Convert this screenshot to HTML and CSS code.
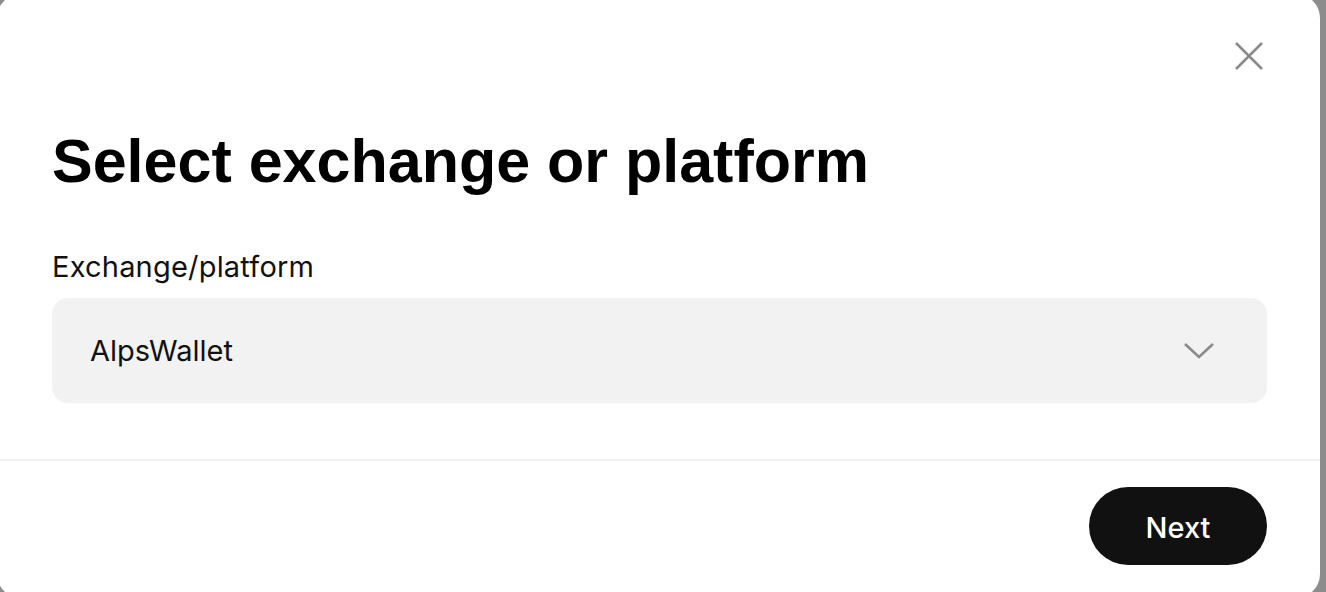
FILE: index.html
```html
<!DOCTYPE html>
<html lang="en">
<head>
    <meta charset="UTF-8">
    <meta name="viewport" content="width=device-width, initial-scale=1.0">
    <title>Select exchange or platform</title>
    <link rel="stylesheet" href="styles.css">
</head>
<body>

    <div class="modal">
        <div class="modal-body">
            <div class="top-row">
                <button class="close-button" aria-label="Close">
                    <svg width="30" height="30" viewBox="0 0 30 30">
                        <path d="M2 2 L28 28 M28 2 L2 28" stroke="#8a8a8a" stroke-width="2.6" fill="none"/>
                    </svg>
                </button>
            </div>

            <h1>Select exchange or platform</h1>

            <label class="field-label" for="platform">Exchange/platform</label>
            <div class="select-box" id="platform">
                <span>AlpsWallet</span>
                <svg width="32" height="18" viewBox="0 0 32 18">
                    <path d="M2 2 L16 15 L30 2" stroke="#8a8a8a" stroke-width="2.6" fill="none"/>
                </svg>
            </div>
        </div>

        <div class="modal-footer">
            <button class="next-button">Next</button>
        </div>
    </div>

</body>
</html>
```

FILE: styles.css
```css
/* Core styles */
body {
    margin: 0;
    background-color: #8c8c8c;
    font-family: Inter, "Noto Sans", sans-serif;
    color: #111;
    overflow: hidden;
}

.modal {
    margin: -6px 0 0 -3px;
    width: 1323px;
    height: 604px;
    background-color: #fff;
    border-radius: 24px;
    display: flex;
    flex-direction: column;
}

.modal-body {
    padding: 47px 53px 0 55px;
    border-bottom: 2px solid #f2f2f2;
    height: 467px;
    box-sizing: border-box;
}

.top-row {
    display: flex;
    justify-content: flex-end;
}

.close-button {
    background: none;
    border: none;
    padding: 0;
    margin-right: 3px;
    width: 30px;
    height: 30px;
    cursor: pointer;
}

h1 {
    font-family: "Liberation Sans", Arial, sans-serif;
    font-weight: 700;
    font-size: 61px;
    line-height: 70px;
    margin: 55px 0 0 0;
    color: #000;
}

.field-label {
    display: block;
    font-size: 29px;
    letter-spacing: 0.2px;
    line-height: 36px;
    margin-top: 53px;
    color: #111;
}

.select-box {
    margin-top: 13px;
    height: 105px;
    background-color: #f2f2f2;
    border-radius: 16px;
    display: flex;
    align-items: center;
    justify-content: space-between;
    padding: 0 52px 0 38px;
    font-size: 29px;
}

.modal-footer {
    display: flex;
    justify-content: flex-end;
    padding: 26px 53px 0 0;
}

.next-button {
    width: 178px;
    height: 78px;
    border: none;
    border-radius: 39px;
    background-color: #111;
    color: #fff;
    font-family: Inter, "Noto Sans", sans-serif;
    font-size: 29px;
    font-weight: 500;
    padding-top: 3px;
    cursor: pointer;
}
```
